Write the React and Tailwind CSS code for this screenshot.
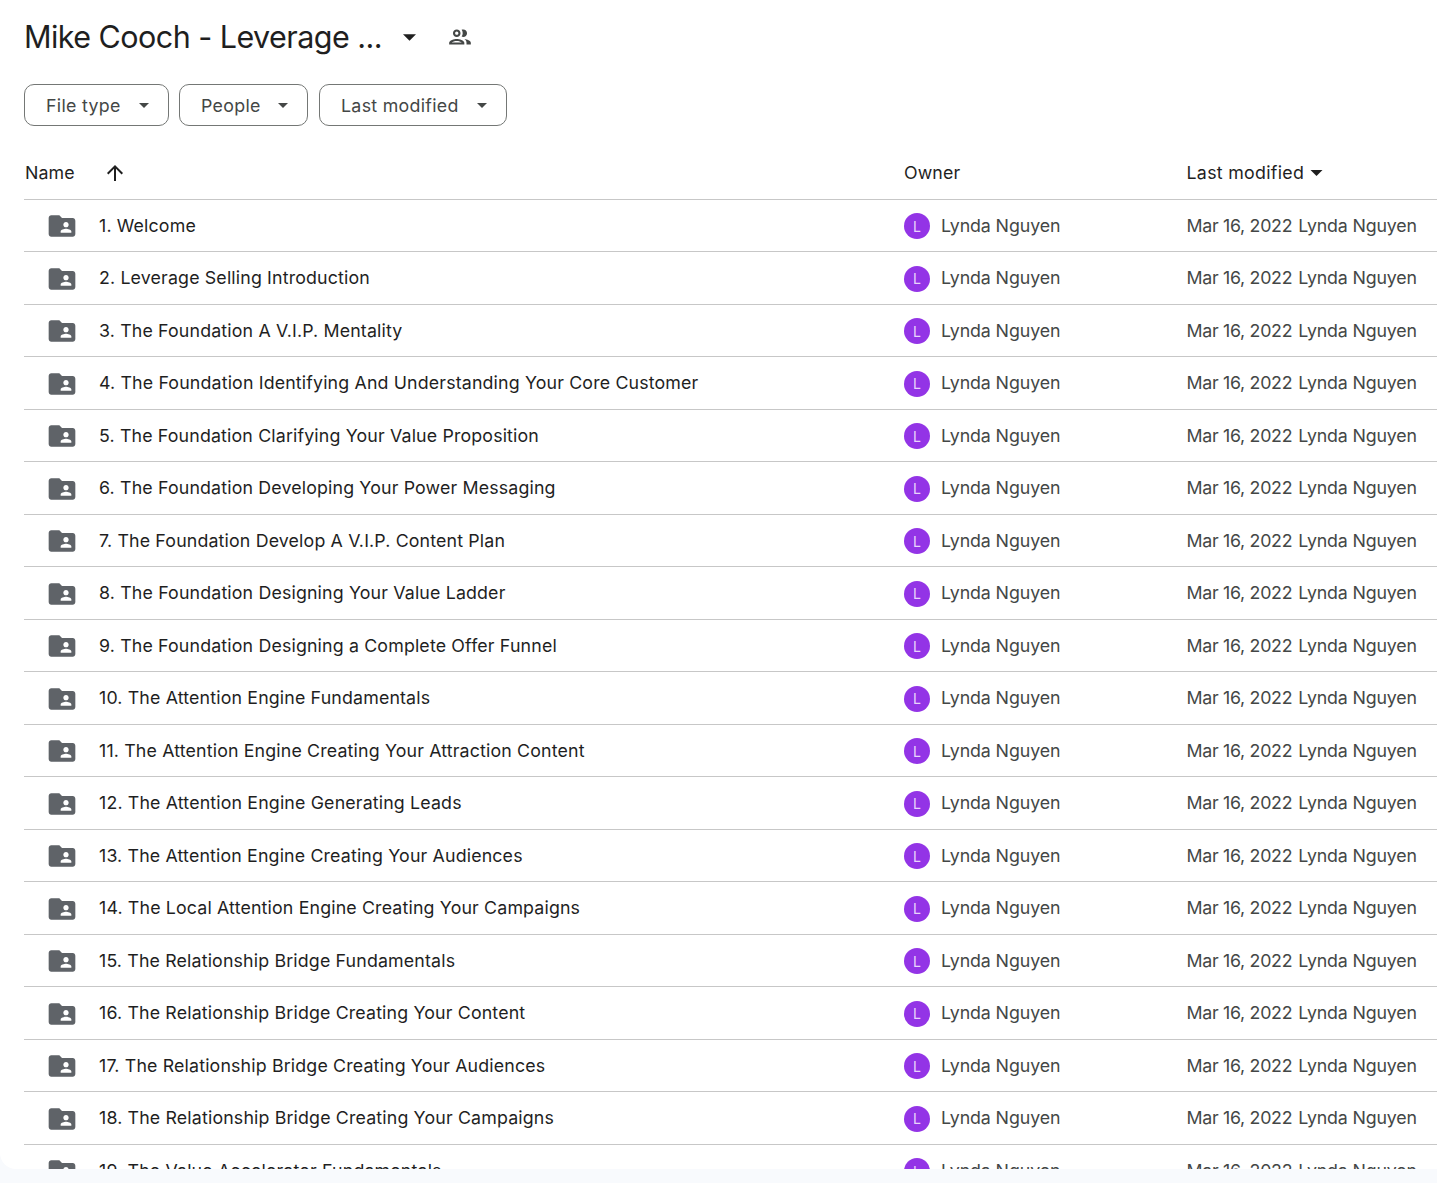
const rows = [
  "1. Welcome",
  "2. Leverage Selling Introduction",
  "3. The Foundation A V.I.P. Mentality",
  "4. The Foundation Identifying And Understanding Your Core Customer",
  "5. The Foundation Clarifying Your Value Proposition",
  "6. The Foundation Developing Your Power Messaging",
  "7. The Foundation Develop A V.I.P. Content Plan",
  "8. The Foundation Designing Your Value Ladder",
  "9. The Foundation Designing a Complete Offer Funnel",
  "10. The Attention Engine Fundamentals",
  "11. The Attention Engine Creating Your Attraction Content",
  "12. The Attention Engine Generating Leads",
  "13. The Attention Engine Creating Your Audiences",
  "14. The Local Attention Engine Creating Your Campaigns",
  "15. The Relationship Bridge Fundamentals",
  "16. The Relationship Bridge Creating Your Content",
  "17. The Relationship Bridge Creating Your Audiences",
  "18. The Relationship Bridge Creating Your Campaigns",
  "19. The Value Accelerator Fundamentals",
];

function Caret({ className }) {
  return (
    <svg viewBox="0 0 10 5" className={className} fill="currentColor">
      <path d="M0 0h10L5 5z" />
    </svg>
  );
}

function SharedFolder() {
  return (
    <svg viewBox="0 0 24 24" className="ml-[22px] h-[32px] w-[32px] shrink-0 text-[#5f6368]" fill="currentColor">
      <path d="M20 6h-8l-2-2H4c-1.100 0-2 .9-2 2v12c0 1.100.9 2 2 2h16c1.100 0 2-.9 2-2V8c0-1.100-.9-2-2-2zm-5 3c1.100 0 2 .9 2 2s-.9 2-2 2-2-.9-2-2 .9-2 2-2zm4 8h-8v-1c0-1.330 2.670-2 4-2s4 .67 4 2v1z" />
    </svg>
  );
}

function PeopleOutline() {
  return (
    <svg viewBox="0 0 24 24" className="h-[26px] w-[26px] text-[#444746]" fill="currentColor">
      <path d="M9 13.750c-2.340 0-7 1.170-7 3.500V19h14v-1.750c0-2.330-4.660-3.500-7-3.500zM4.340 17c.84-.58 2.870-1.250 4.660-1.250s3.820.67 4.660 1.250H4.340zM9 12c1.930 0 3.500-1.570 3.500-3.500S10.930 5 9 5 5.500 6.570 5.500 8.500 7.070 12 9 12zm0-5c.83 0 1.500.67 1.500 1.500S9.830 10 9 10s-1.500-.67-1.500-1.500S8.170 7 9 7zm7.040 6.810c1.160.84 1.960 1.960 1.960 3.440V19h4v-1.750c0-2.020-3.500-3.170-5.960-3.440zM15 12c1.930 0 3.500-1.570 3.500-3.500S16.930 5 15 5c-.54 0-1.040.13-1.500.35.630.89 1 1.980 1 3.150s-.37 2.260-1 3.150c.46.220.96.350 1.500.350z" />
    </svg>
  );
}

function Chip({ label, width }) {
  return (
    <button className={`flex h-[42px] items-center justify-between rounded-[10px] border border-[#747775] pl-[21px] pr-[19px] text-[#444746] ${width}`}>
      <span className="pt-[2px] tracking-[0.3px]">{label}</span>
      <Caret className="h-[5px] w-[10px]" />
    </button>
  );
}

export default function App() {
  return (
    <div className="h-[1183px] w-[1437px] overflow-hidden bg-[#f8fafd] font-['Inter',sans-serif] text-[17.8px]">
      <div className="h-[1169px] overflow-hidden rounded-bl-[16px] bg-white pl-[24px]">
        {/* Title */}
        <div className="flex h-[84px] items-start pt-[15px]">
          <h1 className="w-[372px] text-[30.5px] leading-[44px] font-normal tracking-[-0.55px] text-[#1f1f1f]">Mike Cooch - Leverage ...</h1>
          <Caret className="mt-[19px] ml-[7px] h-[7px] w-[13px] text-[#1f1f1f]" />
          <div className="mt-[9px] ml-[31px]">
            <PeopleOutline />
          </div>
        </div>

        {/* Filters */}
        <div className="flex gap-[10px]">
          <Chip label="File type" width="w-[145px]" />
          <Chip label="People" width="w-[129px]" />
          <Chip label="Last modified" width="ml-[1px] w-[188px]" />
        </div>

        {/* Header */}
        <div className="mt-[21px] flex h-[52.5px] items-center border-b border-[#c7c7c7] pt-[1px] text-[#1f1f1f]">
          <div className="flex w-[880px] items-center pl-[1px]">
            <span className="tracking-[0.1px]">Name</span>
            <svg viewBox="0 0 24 24" className="ml-[28px] h-[24px] w-[24px]" fill="currentColor">
              <path d="M4 12l1.410 1.410L11 7.830V20h2V7.830l5.580 5.590L20 12l-8-8-8 8z" />
            </svg>
          </div>
          <div className="w-[282.500px] tracking-[0.1px]">Owner</div>
          <div className="flex items-center gap-[6px]">
            <span className="tracking-[0.3px]">Last modified</span>
            <Caret className="h-[6px] w-[13px]" />
          </div>
        </div>

        {/* Rows */}
        {rows.map((name) => (
          <div key={name} className="flex h-[52.5px] items-center border-b border-[#c7c7c7] pt-[2px]">
            <div className="flex w-[880px] items-center tracking-[0.15px] text-[#1f1f1f]">
              <SharedFolder />
              <span className="ml-[21px]">{name}</span>
            </div>
            <div className="flex w-[282.500px] items-center gap-[11px] tracking-[-0.1px] text-[#444746]">
              <div className="flex h-[26px] w-[26px] items-center justify-center rounded-full bg-[#9334e6] text-[14px] text-[#e9d5fb]">L</div>
              <span>Lynda Nguyen</span>
            </div>
            <div className="flex gap-[6px] text-[#444746]">
              <span className="tracking-[-0.3px]">Mar 16, 2022</span>
              <span className="tracking-[-0.15px]">Lynda Nguyen</span>
            </div>
          </div>
        ))}
      </div>
    </div>
  );
}
